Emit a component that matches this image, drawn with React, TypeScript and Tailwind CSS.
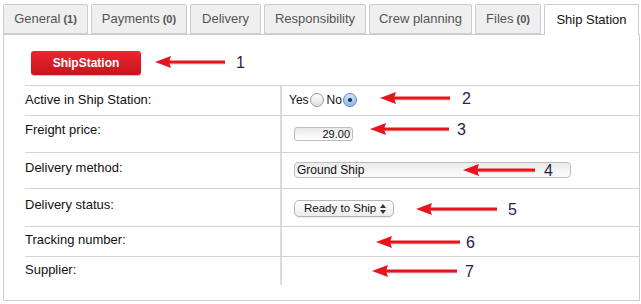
import React from "react";

const tabs = [
  { label: "General", count: "(1)", w: "w-[85px]" },
  { label: "Payments", count: "(0)", w: "w-[96px]" },
  { label: "Delivery", count: "", w: "w-[71px]" },
  { label: "Responsibility", count: "", w: "w-[102px]" },
  { label: "Crew planning", count: "", w: "w-[103px]" },
  { label: "Files", count: "(0)", w: "w-[66px]" },
];

const arrows = [
  { tip: 155, tail: 225, y: 62, n: "1", nx: 236 },
  { tip: 380, tail: 450, y: 98, n: "2", nx: 462 },
  { tip: 370, tail: 449, y: 129, n: "3", nx: 457 },
  { tip: 463, tail: 535, y: 170, n: "4", nx: 544 },
  { tip: 416, tail: 497, y: 209, n: "5", nx: 508 },
  { tip: 376, tail: 460, y: 242, n: "6", nx: 466 },
  { tip: 372, tail: 457, y: 271, n: "7", nx: 465 },
];

function Radio({ checked }: { checked?: boolean }) {
  return checked ? (
    <span className="w-[14px] h-[14px] rounded-full border border-[#5b84c0] bg-gradient-to-b from-[#cfe3fb] to-[#8db8ec] flex items-center justify-center">
      <span className="w-[4px] h-[4px] rounded-full bg-[#1d2a3a]" />
    </span>
  ) : (
    <span className="w-[14px] h-[14px] rounded-full border border-[#9a9a9a] bg-gradient-to-b from-[#ffffff] to-[#dedede]" />
  );
}

function Row({
  label,
  h,
  pt,
  children,
}: {
  label: string;
  h: string;
  pt: string;
  children?: React.ReactNode;
}) {
  return (
    <div className={`flex border-t border-[#d2d2d2] ${h}`}>
      <div className={`w-[257px] shrink-0 border-r-2 border-[#dcdcdc] text-[13px] leading-[15px] text-[#111] ${pt}`}>{label}</div>
      <div className="flex-1 pl-[12px]">{children}</div>
    </div>
  );
}

export default function App() {
  return (
    <div className="relative w-[641px] h-[304px] bg-white overflow-hidden font-['Liberation_Sans',Arial,sans-serif]">
      <div className="pt-[4px] pl-[3px] pr-[1px]">
        {/* Tabs */}
        <div className="flex gap-[3px] h-[30px]">
          {tabs.map((t) => (
            <div
              key={t.label}
              className={`${t.w} h-[30px] flex items-center justify-center gap-[3px] border border-[#cccccc] rounded-t-[2px] bg-[#efefef] text-[13px] text-[#555]`}
            >
              <span>{t.label}</span>
              {t.count && <span className="text-[11px] font-bold">{t.count}</span>}
            </div>
          ))}
          <div className="w-[95px] h-[31px] relative z-10 flex items-center justify-center border border-b-0 border-[#cccccc] rounded-t-[2px] bg-white text-[13px] text-[#111]">
            Ship Station
          </div>
        </div>

        {/* Panel */}
        <div className="h-[267px] border border-[#cccccc] pl-[21px]">
          <div className="pt-[15px] pl-[6px]">
            <button className="w-[110px] h-[24px] rounded-[3px] bg-gradient-to-b from-[#ec2630] to-[#c8141d] text-white text-[12px] font-bold shadow-[0_1px_1px_rgba(0,0,0,0.25)]">
              ShipStation
            </button>
          </div>
          <div className="mt-[10px]">
            <Row label="Active in Ship Station:" h="h-[30px]" pt="pt-[6px]">
              <div className="flex items-center h-full pb-[2px] text-[12px] text-[#111]">
                <span className="ml-[-5px] mr-[1px]">Yes</span>
                <Radio />
                <span className="ml-[3px] mr-[1px]">No</span>
                <Radio checked />
              </div>
            </Row>
            <Row label="Freight price:" h="h-[37px]" pt="pt-[6px]">
              <div className="pt-[11px]">
                <div className="w-[59px] h-[14px] rounded-[3px] border border-[#bdbdbd] bg-gradient-to-b from-[#e9e9e9] to-[#ffffff] text-[11px] leading-[12px] text-right pr-[2px] text-[#111]">
                  29.00
                </div>
              </div>
            </Row>
            <Row label="Delivery method:" h="h-[36px]" pt="pt-[7px]">
              <div className="pt-[9px]">
                <div className="w-[277px] h-[16px] rounded-[4px] border border-[#bdbdbd] bg-gradient-to-b from-[#ececec] to-[#fbfbfb] text-[12px] leading-[14px] pl-[2px] text-[#111]">
                  Ground Ship
                </div>
              </div>
            </Row>
            <Row label="Delivery status:" h="h-[38px]" pt="pt-[8px]">
              <div className="pt-[11px]">
                <div className="w-[100px] h-[17px] rounded-[5px] border border-[#b5b5b5] bg-gradient-to-b from-[#ffffff] to-[#ececec] text-[11.5px] leading-[15px] pl-[9px] text-[#111] flex items-center justify-between pr-[7px] shadow-[0_1px_1px_rgba(0,0,0,0.08)]">
                  <span>Ready to Ship</span>
                  <svg width="6" height="10" viewBox="0 0 6 10">
                    <path d="M3 0 L6 4 L0 4 Z" fill="#333" />
                    <path d="M0 6 L6 6 L3 10 Z" fill="#333" />
                  </svg>
                </div>
              </div>
            </Row>
            <Row label="Tracking number:" h="h-[30px]" pt="pt-[5px]" />
            <Row label="Supplier:" h="h-[29px]" pt="pt-[5px]" />
          </div>
        </div>
      </div>

      {/* Annotations */}
      <svg className="absolute inset-0 pointer-events-none" width="641" height="304">
        {arrows.map((a) => (
          <g key={a.n}>
            <line x1={a.tip + 12} y1={a.y + 1} x2={a.tail} y2={a.y + 1} stroke="rgba(0,0,0,0.18)" strokeWidth="3" />
            <line x1={a.tip + 12} y1={a.y} x2={a.tail} y2={a.y} stroke="#e8141c" strokeWidth="3" />
            <polygon points={`${a.tip},${a.y} ${a.tip + 16},${a.y - 6} ${a.tip + 14},${a.y} ${a.tip + 16},${a.y + 6}`} fill="#e8141c" />
            <text x={a.nx} y={a.y + 6} fontSize="16" fill="#2a1c4e" fontFamily="Liberation Sans, Arial, sans-serif">
              {a.n}
            </text>
          </g>
        ))}
      </svg>
    </div>
  );
}
